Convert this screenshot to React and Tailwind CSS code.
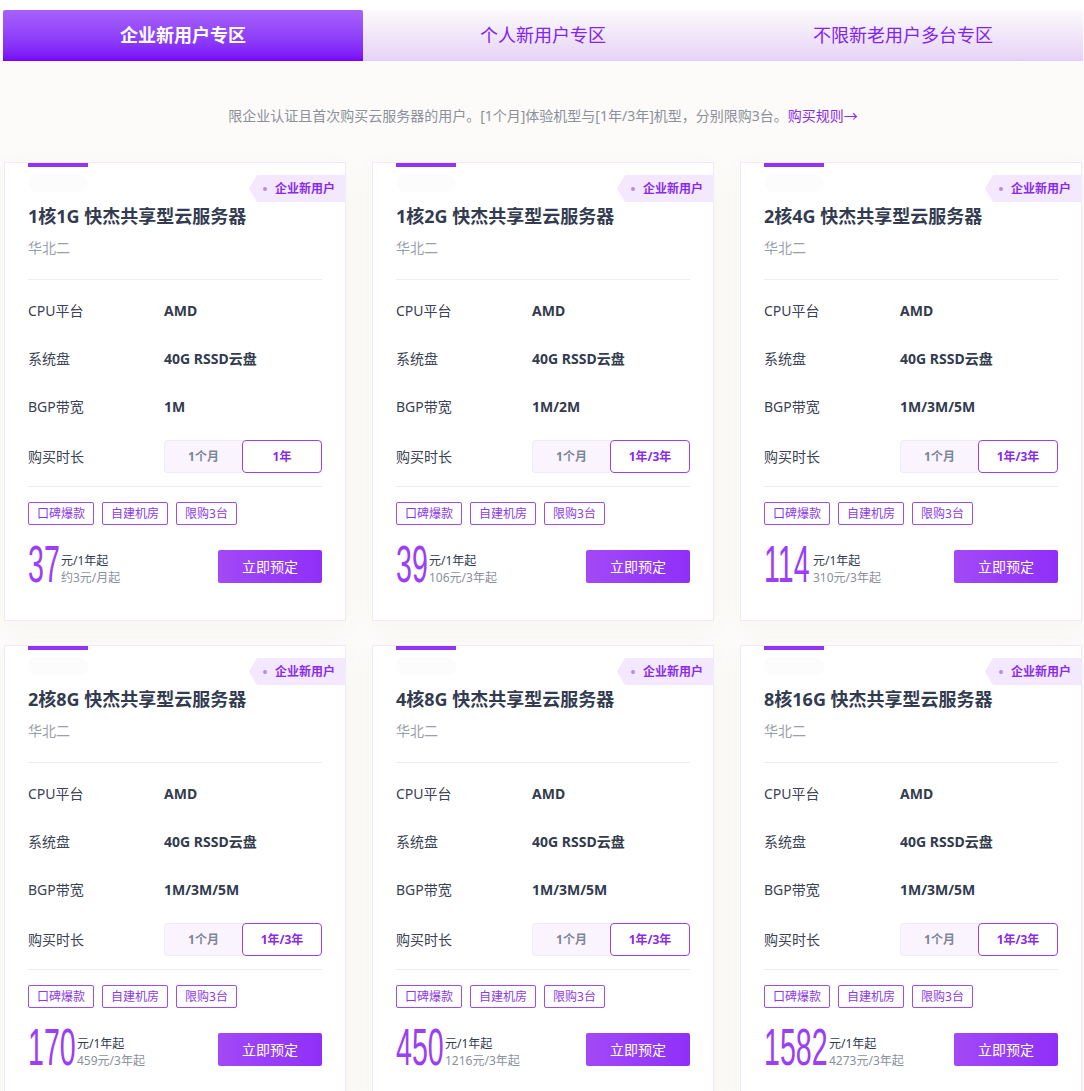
const plans = [
  { name: "1核1G 快杰共享型云服务器", bw: "1M", dur: "1年", price: "37", sub: "约3元/月起" },
  { name: "1核2G 快杰共享型云服务器", bw: "1M/2M", dur: "1年/3年", price: "39", sub: "106元/3年起" },
  { name: "2核4G 快杰共享型云服务器", bw: "1M/3M/5M", dur: "1年/3年", price: "114", sub: "310元/3年起" },
  { name: "2核8G 快杰共享型云服务器", bw: "1M/3M/5M", dur: "1年/3年", price: "170", sub: "459元/3年起" },
  { name: "4核8G 快杰共享型云服务器", bw: "1M/3M/5M", dur: "1年/3年", price: "450", sub: "1216元/3年起" },
  { name: "8核16G 快杰共享型云服务器", bw: "1M/3M/5M", dur: "1年/3年", price: "1582", sub: "4273元/3年起" },
];

const font = { fontFamily: '"Noto Sans", "Noto Sans CJK SC", sans-serif' };

function Tabs() {
  return (
    <div className="grid grid-cols-3 h-[51px] mt-[10px]">
      <div className="flex items-center justify-center rounded-t-[2px] bg-gradient-to-b from-[#a861fa] to-[#7a00f7] text-white text-[18px] font-bold">
        企业新用户专区
      </div>
      <div className="flex items-center justify-center bg-gradient-to-b from-[#fcfafb] to-[#e7d3f6] border-b border-[#e2cdf4] text-[#8024f0] text-[18px]">
        个人新用户专区
      </div>
      <div className="flex items-center justify-center bg-gradient-to-b from-[#fcfafb] to-[#e7d3f6] border-b border-[#e2cdf4] text-[#8024f0] text-[18px] rounded-tr-[2px]">
        不限新老用户多台专区
      </div>
    </div>
  );
}

function Spec({ label, value }) {
  return (
    <div className="flex items-center h-12 text-[14px]">
      <span className="w-[136px] text-[#3b4254]">{label}</span>
      <span className="font-bold text-[#333b4e]">{value}</span>
    </div>
  );
}

function Card({ p }) {
  const numW = p.price.length * 16;
  return (
    <div className="relative bg-white border border-[#f1e8fb] shadow-[0_6px_24px_rgba(120,100,60,0.04)] px-[23px] pb-[35px] overflow-hidden">
      <div className="w-[60px] h-1 bg-[#9234f5]" />
      <div className="w-[60px] h-[18px] mt-[7px] rounded-full bg-[#fcfcfc]" />
      <div
        className="absolute right-0 top-[12px] h-[27px] w-[96px] bg-[#f3e8fe] flex items-center pl-[14px] gap-[8px]"
        style={{ clipPath: "polygon(8px 0, 100% 0, 100% 100%, 8px 100%, 0 50%)" }}
      >
        <span className="w-1 h-1 rounded-full bg-[#b68be9]" />
        <span className="text-[12px] font-bold text-[#8a2be8]">企业新用户</span>
      </div>
      <div className="mt-[11px] text-[18px] leading-[26px] font-bold text-[#333b50]">{p.name}</div>
      <div className="mt-[9px] text-[14px] leading-5 text-[#9aa0ab]">华北二</div>
      <div className="mt-[21px] h-px bg-[#eeeaf3]" />
      <div className="mt-[6px]">
        <Spec label="CPU平台" value="AMD" />
        <Spec label="系统盘" value="40G RSSD云盘" />
        <Spec label="BGP带宽" value={p.bw} />
      </div>
      <div className="flex items-center mt-[10px] h-[33px] text-[14px]">
        <span className="w-[136px] text-[#3b4254]">购买时长</span>
        <div className="flex h-[33px] text-[12px] font-bold">
          <div className="w-[78px] flex items-center justify-center bg-[#faf4fe] border border-[#f3eaf9] border-r-0 rounded-l-[4px] text-[#7d8696]">
            1个月
          </div>
          <div className="w-[80px] flex items-center justify-center border border-[#9a3ff5] rounded-[4px] text-[#8a2be8]">
            {p.dur}
          </div>
        </div>
      </div>
      <div className="mt-[13px] h-px bg-[#eeeaf3]" />
      <div className="flex gap-2 mt-[15px]">
        {["口碑爆款", "自建机房", "限购3台"].map((t) => (
          <span
            key={t}
            className="h-[23px] px-[8px] flex items-center border border-[#9b4df5] rounded-[2px] text-[12px] text-[#8a3ae8]"
          >
            {t}
          </span>
        ))}
      </div>
      <div className="flex items-center justify-between mt-[22px] h-[38px]">
        <div className="flex items-end">
          <div className="relative h-[38px] overflow-visible" style={{ width: numW }}>
            <span
              className="absolute left-0 top-[-9px] origin-left scale-x-[0.55] text-[52px] leading-[52px] text-[#9a3ff5]"
              style={{ fontFamily: '"Liberation Sans", Arial, sans-serif' }}
            >
              {p.price}
            </span>
          </div>
          <div className="ml-[1px] mb-[-1px] text-[12px] leading-[17px]">
            <div className="text-[#333b4e]">元/1年起</div>
            <div className="text-[#8a909c]">{p.sub}</div>
          </div>
        </div>
        <button className="w-[104px] h-[33px] rounded-[2px] bg-gradient-to-r from-[#a249f7] to-[#8f2ff8] text-white text-[14px]">
          立即预定
        </button>
      </div>
    </div>
  );
}

export default function App() {
  return (
    <div className="min-h-screen bg-[#fcfbf9]" style={font}>
      <div className="w-[1080px] ml-[3px]">
        <Tabs />
        <div className="mt-[45px] text-center text-[14px] leading-5 text-[#8b909a]">
          限企业认证且首次购买云服务器的用户。[1个月]体验机型与[1年/3年]机型，分别限购3台。
          <span className="text-[#8a2be8]">购买规则→</span>
        </div>
        <div className="grid grid-cols-3 gap-x-[26px] gap-y-[24px] mt-9 ml-[1px] w-[1078px]">
          {plans.map((p) => (
            <Card key={p.name} p={p} />
          ))}
        </div>
        <div className="h-10" />
      </div>
    </div>
  );
}
